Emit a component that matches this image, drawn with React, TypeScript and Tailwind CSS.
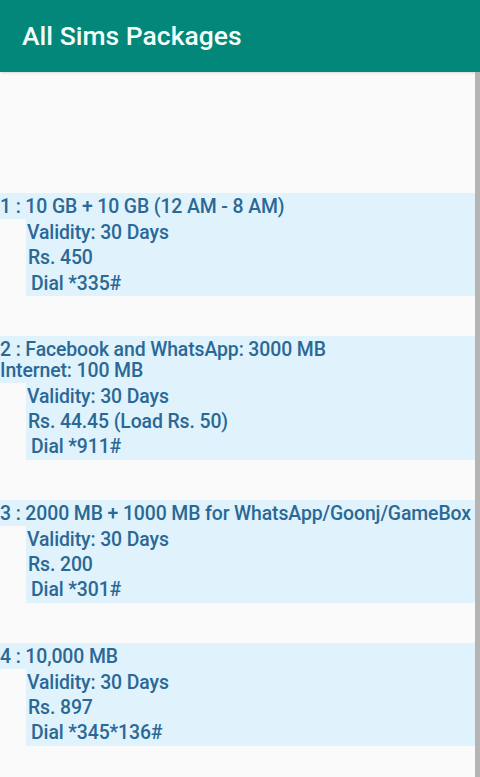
import React from "react";

type Pack = {
  title: string[];
  validity: string;
  price: string;
  dial: string;
};

const packs: Pack[] = [
  {
    title: ["1 : 10 GB + 10 GB (12 AM - 8 AM)"],
    validity: "Validity: 30 Days",
    price: "Rs. 450",
    dial: "Dial *335#",
  },
  {
    title: ["2 : Facebook and WhatsApp: 3000 MB", "Internet: 100 MB"],
    validity: "Validity: 30 Days",
    price: "Rs. 44.45 (Load Rs. 50)",
    dial: "Dial *911#",
  },
  {
    title: ["3 : 2000 MB + 1000 MB for WhatsApp/Goonj/GameBox"],
    validity: "Validity: 30 Days",
    price: "Rs. 200",
    dial: "Dial *301#",
  },
  {
    title: ["4 : 10,000 MB"],
    validity: "Validity: 30 Days",
    price: "Rs. 897",
    dial: "Dial *345*136#",
  },
];

function PackItem({ pack }: { pack: Pack }) {
  return (
    <div className="flex flex-col">
      <div className="bg-[#e0f2fb] pt-[3px] pb-[2px] leading-[21px]">
        {pack.title.map((line) => (
          <div key={line} className="whitespace-nowrap">
            {line}
          </div>
        ))}
      </div>
      <div className="ml-[26px] bg-[#e0f2fb] pt-[1px] leading-[25.3px]">
        <div className="pl-[1px]">{pack.validity}</div>
        <div className="pl-[2px]">{pack.price}</div>
        <div className="pl-[5px]">{pack.dial}</div>
      </div>
    </div>
  );
}

export default function App() {
  return (
    <div
      className="flex h-[777px] w-[480px] flex-col overflow-hidden bg-[#fafafa]"
      style={{ fontFamily: "Roboto, 'Noto Sans', sans-serif" }}
    >
      <header className="flex h-[72px] shrink-0 items-center bg-[#02877a] px-[22px] shadow-sm">
        <h1 className="text-[26.5px] font-medium text-[#f2fffb]">All Sims Packages</h1>
      </header>
      <div className="flex min-h-0 flex-1">
        <main className="flex flex-1 flex-col gap-[40px] pt-[121px] text-[19.4px] font-medium tracking-[-0.1px] text-[#2a6896]">
          {packs.map((p) => (
            <PackItem key={p.title[0]} pack={p} />
          ))}
        </main>
        <div className="w-[5px] shrink-0 bg-[#b4b4b4]" />
      </div>
    </div>
  );
}
